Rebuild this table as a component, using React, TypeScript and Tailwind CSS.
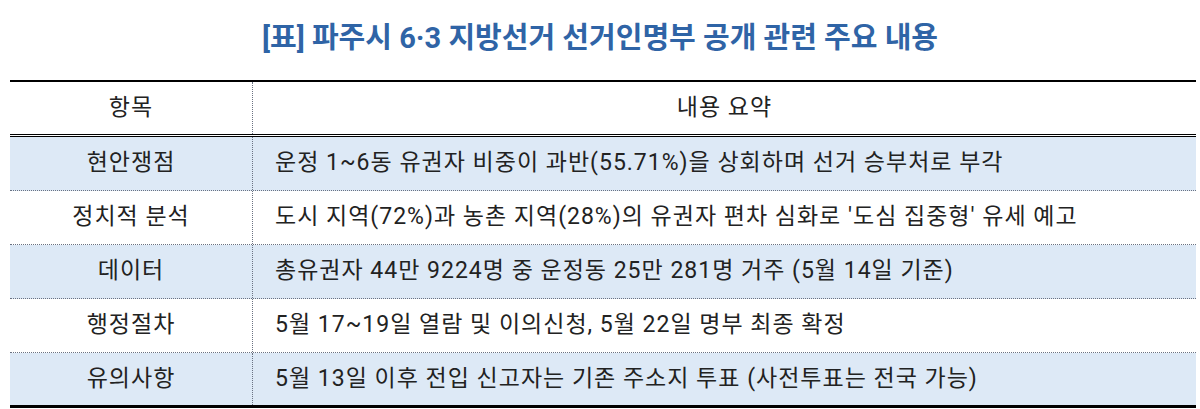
import React from 'react';

const rows = [
  { label: '현안쟁점', text: '운정 1~6동 유권자 비중이 과반(55.71%)을 상회하며 선거 승부처로 부각', shaded: true },
  { label: '정치적 분석', text: "도시 지역(72%)과 농촌 지역(28%)의 유권자 편차 심화로 '도심 집중형' 유세 예고", shaded: false },
  { label: '데이터', text: '총유권자 44만 9224명 중 운정동 25만 281명 거주 (5월 14일 기준)', shaded: true },
  { label: '행정절차', text: '5월 17~19일 열람 및 이의신청, 5월 22일 명부 최종 확정', shaded: false },
  { label: '유의사항', text: '5월 13일 이후 전입 신고자는 기존 주소지 투표 (사전투표는 전국 가능)', shaded: true },
];

export default function App() {
  return (
    <div className="w-[1200px] h-[409px] overflow-hidden bg-white text-[#222] font-['Roboto','Noto_Sans_CJK_KR',sans-serif]">
      {/* Title */}
      <h1 className="h-[80px] pt-[18px] text-center text-[29px] leading-[40px] font-bold text-[#2f64a6]">
        [표] 파주시 6·3 지방선거 선거인명부 공개 관련 주요 내용
      </h1>

      {/* Table */}
      <div className="ml-[10px] w-[1186px] border-t-2 border-b-[3px] border-black text-[23px] tracking-[1px]">
        <div className="grid grid-cols-[243px_1fr] h-[55px] border-b-[3px] border-double border-black">
          <div className="flex items-center justify-center border-r border-dotted border-gray-500">항목</div>
          <div className="flex items-center justify-center">내용 요약</div>
        </div>
        {rows.map((row, i) => (
          <div
            key={row.label}
            className={`grid grid-cols-[243px_1fr] ${i === rows.length - 1 ? 'h-[52px]' : 'h-[54px] border-b border-dotted border-gray-500'} ${row.shaded ? 'bg-[#dde9f6]' : 'bg-white'}`}
          >
            <div className="flex items-center justify-center border-r border-dotted border-gray-500">{row.label}</div>
            <div className="flex items-center pl-[22px]">{row.text}</div>
          </div>
        ))}
      </div>
    </div>
  );
}
